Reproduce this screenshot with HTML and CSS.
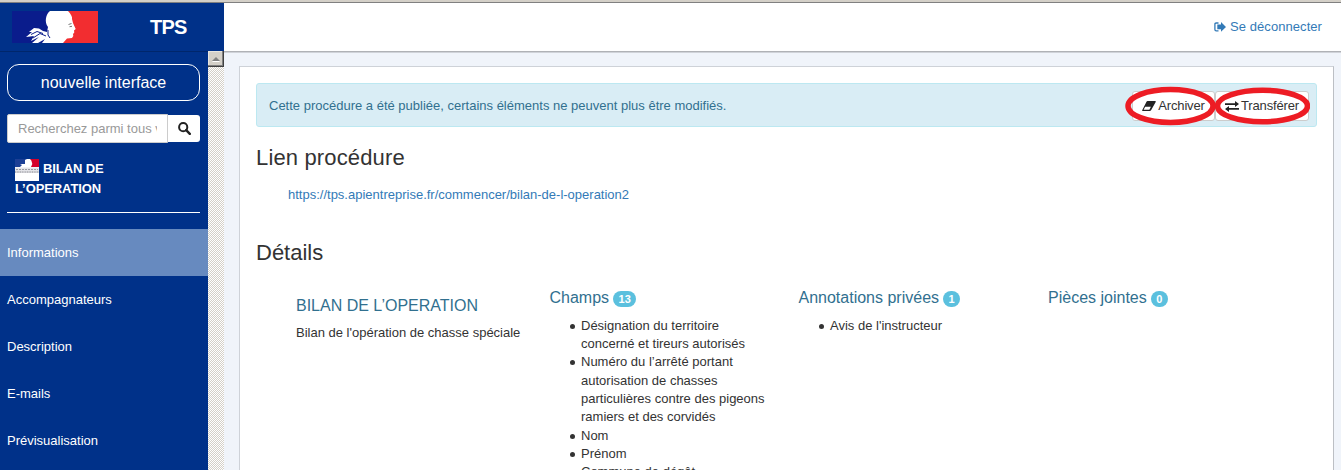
FILE: index.html
```
<!DOCTYPE html>
<html lang="fr">
<head>
<meta charset="utf-8">
<title>TPS</title>
<link rel="stylesheet" href="styles.css">
</head>
<body>
<svg class="defs" width="0" height="0">
  <symbol id="marianne" viewBox="0 0 86 32">
    <path fill="#0a1c8c" d="M0 0h46v32H0z"/>
    <path fill="#f22d30" d="M51 0h35v32H51z"/>
    <path fill="#fff" d="M38 0H56C59 3 60.500 6 60 8L61 12L63.700 18L62 19.500L62.300 21.500L61 23L61.300 25L60 27L55 27.500L51 32H30L33 28L26 32H20L27 26L19 30L22 25L14 26L20 21L17 21L22 17L27 17.500L31 20L35 21L36 16C32 11 34 3 38 0Z"/>
    <path fill="none" stroke="#0a1c8c" stroke-width="1" d="M19 23.500L25 20.500L31 22.500M21 27L28 22.500L34 25M36 19Q35 25 38 27"/>
    <path fill="none" stroke="#777" stroke-width="1" d="M56.500 13.500l3-1M57.500 15.700l2.500-.4"/>
  </symbol>
</svg>
<div class="window-edge"></div>
<header class="topbar">
  <div class="brand">
    <svg class="logo" viewBox="0 0 86 32"><use href="#marianne"/></svg>
    <span class="brand-name">TPS</span>
  </div>
  <a class="logout"><svg class="logout-icon" viewBox="0 0 12 10"><path fill="none" stroke="currentColor" stroke-width="1.300" d="M4.500 1H2.200Q.9 1 .9 2.300V7.500Q.9 8.800 2.200 8.800H4.500"/><path fill="currentColor" d="M7 0l5 4.900L7 9.800V7.200H3.300V2.600H7z"/></svg><span>Se déconnecter</span></a>
</header>
<div class="body">
  <aside class="sidebar">
    <nav class="side">
      <a class="switch"><span>nouvelle interface</span></a>
      <div class="search">
        <div class="field"><span>Recherchez parmi tous vos dossiers</span></div>
        <div class="search-btn"><svg viewBox="0 0 13 13" width="13" height="13"><circle cx="5.200" cy="5.200" r="4.100" fill="none" stroke="#222" stroke-width="2"/><path d="M8.200 8.200l3.600 3.600" stroke="#222" stroke-width="2.400" stroke-linecap="round"/></svg></div>
      </div>
      <div class="procedure">
        <svg class="mini" viewBox="0 0 24 22"><path fill="#fff" d="M0 0h24v22H0z"/><path fill="#1c3f95" d="M0 0h12v8H0z"/><path fill="#d4002a" d="M15 0h9v8h-9z"/><path fill="#fff" d="M10 1C12-.5 16-.5 16.500 2L17.300 5 16 8H5L7 6 5 5 10 5Z"/><path fill="#e4e4e8" d="M0 8.500h24v5.500H0z"/><path stroke="#9a9aa0" stroke-width="1" stroke-dasharray="2 1" d="M1 10.500h22"/><path stroke="#88888e" stroke-width="1.200" stroke-dasharray="1 .7" d="M0 13h24"/></svg>
        <span>BILAN DE L’OPERATION</span>
      </div>
      <ul class="menu">
        <li class="active">Informations</li>
        <li>Accompagnateurs</li>
        <li>Description</li>
        <li>E-mails</li>
        <li>Prévisualisation</li>
      </ul>
    </nav>
    <div class="scrollbar"><div class="arrow"><i></i></div></div>
  </aside>
  <main class="main">
    <section class="card">
      <div class="alert">
        <span>Cette procédure a été publiée, certains éléments ne peuvent plus être modifiés.</span>
        <div class="actions">
          <a class="btn archive"><svg width="14" height="10" viewBox="0 0 14 10"><path fill="#222" d="M5.500 0H13.200Q14.200 0 13.700 1L9.200 9Q8.700 10 7.700 10H.7Q-.3 10 .3 9L4.500.7Q4.900 0 5.500 0z"/><path fill="#fff" d="M3.200 5.800H8.900L7.400 8.700H1.600z"/></svg><span>Archiver</span>
            <svg class="ring" width="91" height="40"><ellipse cx="45.500" cy="20" rx="42.500" ry="16.500"/></svg></a>
          <a class="btn transfer"><svg width="14" height="11" viewBox="0 0 14 11"><path fill="#222" d="M0 2.200h10V0L14 3l-4 3V3.900H0zM14 7.100H4V5L0 8l4 3V8.800h10z"/></svg><span>Transférer</span>
            <svg class="ring" width="95" height="38"><ellipse cx="47.500" cy="19" rx="45" ry="15.800"/></svg></a>
        </div>
      </div>
      <h2 class="title-link">Lien procédure</h2>
      <a class="url">https://tps.apientreprise.fr/commencer/bilan-de-l-operation2</a>
      <h2 class="title-details">Détails</h2>
      <div class="columns">
        <div class="col first">
          <h3>BILAN DE L’OPERATION</h3>
          <p>Bilan de l'opération de chasse spéciale</p>
        </div>
        <div class="col">
          <h3><span>Champs</span><b class="badge">13</b></h3>
          <ul>
            <li>Désignation du territoire<br>concerné et tireurs autorisés</li>
            <li>Numéro du l’arrêté portant<br>autorisation de chasses<br>particulières contre des pigeons<br>ramiers et des corvidés</li>
            <li>Nom</li>
            <li>Prénom</li>
            <li>Commune de dégât</li>
          </ul>
        </div>
        <div class="col">
          <h3><span>Annotations privées</span><b class="badge">1</b></h3>
          <ul><li>Avis de l'instructeur</li></ul>
        </div>
        <div class="col">
          <h3><span>Pièces jointes</span><b class="badge">0</b></h3>
        </div>
      </div>
    </section>
  </main>
</div>
</body>
</html>
```
FILE: styles.css
```
* { box-sizing: border-box; }
body {
  margin: 0;
  height: 470px;
  overflow: hidden;
  display: flex;
  flex-direction: column;
  background: #f0f4fa;
  color: #333;
  font: 13px/18.3px "Liberation Sans", Arial, sans-serif;
}
.defs { position: absolute; }
h2, h3, p, ul { margin: 0; padding: 0; font-weight: 400; }
.window-edge { flex: none; height: 3px; background: #d4d0c8; border-bottom: 1px solid #808080; }
.topbar {
  flex: none;
  height: 48px;
  display: flex;
  background: #fff;
}
.brand {
  width: 224px;
  display: flex;
  align-items: flex-start;
  padding: 8px 0 0 12px;
  background: #003189;
  color: #fff;
}
.logo { width: 86px; height: 32px; }
.brand-name { margin-left: 52px; font-size: 20px; line-height: 33px; font-weight: 700; letter-spacing: -0.8px; }
.logout { display: flex; align-items: center; gap: 4px; margin-left: auto; padding-right: 19px; color: #337ab7; }
.logout span { letter-spacing: .06px; }
.logout-icon { width: 12px; height: 10px; }
.body { flex: 1; min-height: 0; display: flex; }
.sidebar { width: 224px; display: flex; background: #003189; color: #fff; }
.side { width: 208px; padding-top: 12px; border-top: 1px solid #00266b; }
.switch {
  margin: 0 8px 0 7px;
  height: 37px;
  display: flex;
  align-items: center;
  justify-content: center;
  border: 1px solid #fff;
  border-radius: 12px;
  font-size: 16px;
}
.switch span { padding-top: 1px; }
.search { display: flex; align-items: center; margin: 13px 8px 0 7px; height: 29px; }
.field {
  width: 161px;
  height: 29px;
  padding: 0 10px;
  border: 1px solid #ccc;
  border-radius: 2px 0 0 2px;
  background: #fff;
  color: #999;
  line-height: 27px;
}
.field span { display: block; overflow: hidden; white-space: nowrap; }
.search-btn {
  width: 32px;
  height: 27px;
  display: flex;
  align-items: center;
  justify-content: center;
  border-radius: 0 3px 3px 0;
  background: #fff;
}
.procedure {
  margin: 15px 8px 0 7px;
  height: 55px;
  padding: 1px 60px 0 8px;
  border-bottom: 1px solid #fff;
  font-weight: 700;
  line-height: 20px;
  letter-spacing: -.1px;
}
.mini { width: 24px; height: 22px; float: left; margin: 0 4px -4px 0; }
.procedure span { display: block; }
.menu { margin-top: 16px; list-style: none; }
.menu li { height: 47px; padding-left: 7px; line-height: 47px; }
.menu .active { background: #678abf; }
.scrollbar {
  width: 16px;
  background: repeating-conic-gradient(#fff 0 25%, #d4d0c8 0 50%) 0 0 / 2px 2px;
}
.arrow {
  height: 16px;
  display: flex;
  align-items: center;
  justify-content: center;
  background: #d4d0c8;
  border-right: 1px solid #404040;
  border-bottom: 1px solid #404040;
  box-shadow: inset -1px -1px #808080, inset 1px 1px #e8e6e0;
}
.arrow i { border: 4px solid transparent; border-top: 0; border-bottom-color: #808080; filter: drop-shadow(0 1px #fff); }
.main {
  flex: 1;
  min-width: 0;
  display: flex;
  padding: 14px 7px 0 15px;
  border-top: 1px solid #b0b2b6;
  box-shadow: inset 0 1px #d0d3d9;
}
.card { flex: 1; min-width: 0; padding: 16px; background: #fff; border: 1px solid #ced2d8; border-bottom: 0; border-right-color: #bcbfc4; }
.alert {
  height: 44px;
  display: flex;
  justify-content: space-between;
  align-items: center;
  padding: 2px 7px 0 12px;
  background: #d9edf5;
  border: 1px solid #bce8f1;
  border-radius: 3px;
  color: #31708f;
}
.actions { display: flex; }
.btn {
  height: 30px;
  display: flex;
  align-items: center;
  justify-content: center;
  gap: 2px;
  position: relative;
  background: #fff;
  border: 1px solid #ccc;
  border-radius: 3px;
  color: #333;
}
.archive { width: 83px; }
.transfer { width: 94px; }
.btn span { letter-spacing: -.15px; }
.ring { position: absolute; z-index: 1; fill: none; stroke: #ed1c24; stroke-width: 5.500; }
.archive .ring { left: -8px; top: -6px; }
.transfer .ring { left: -1px; top: -5px; }
h2 { font-size: 22px; line-height: 26px; letter-spacing: .15px; }
.title-link { margin-top: 18px; }
.url { display: block; margin: 15px 0 0 32px; color: #337ab7; }
.title-details { margin-top: 36px; letter-spacing: 0; }
.columns { display: grid; grid-template-columns: 253.500px 249px 249.500px 1fr; margin: 22px 0 0 40px; }
.col h3 { display: flex; align-items: center; gap: 4px; height: 20px; font-size: 16px; line-height: 20px; color: #31708f; }
.col.first { padding-top: 8px; }
.first p { margin-top: 8px; }
.col ul { margin: 8.600px 0 0 31.500px; list-style: none; }
.col li::before {
  content: "";
  float: left;
  width: 5px;
  height: 5px;
  margin: 7px 0 0 -11px;
  border-radius: 50%;
  background: #333;
}
.badge {
  height: 16px;
  padding: 0 5.500px;
  margin-top: 2px;
  border-radius: 8px;
  background: #5bc0de;
  color: #fff;
  font-size: 11px;
  line-height: 16px;
}
```
